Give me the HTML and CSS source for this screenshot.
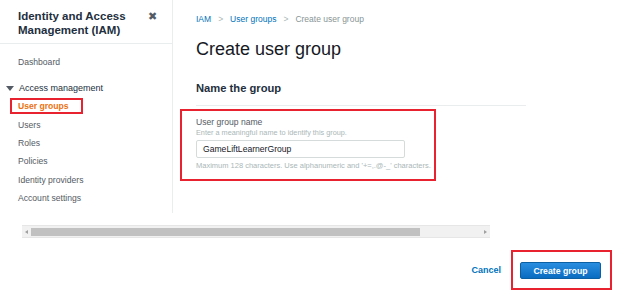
FILE: index.html
```html
<!DOCTYPE html>
<html lang="en">
<head>
  <meta charset="UTF-8" />
  <title>Create user group - IAM</title>
  <link rel="stylesheet" href="styles.css">
</head>
<body>
  <div class="layout">
    <!-- Side navigation -->
    <div class="sidebar">
      <div class="side-head">
        <h2>Identity and Access Management (IAM)</h2>
        <span class="close">&#10006;</span>
      </div>
      <ul class="nav">
        <li class="nav-item">Dashboard</li>
        <li class="nav-group"><span class="caret"></span>Access management</li>
        <li class="nav-item active"><span class="mark">User groups</span></li>
        <li class="nav-item">Users</li>
        <li class="nav-item">Roles</li>
        <li class="nav-item">Policies</li>
        <li class="nav-item">Identity providers</li>
        <li class="nav-item">Account settings</li>
      </ul>
    </div>

    <!-- Main content -->
    <div class="main">
      <div class="crumbs">
        <a href="#">IAM</a><span class="sep">&gt;</span><a href="#">User groups</a><span class="sep">&gt;</span><span class="here">Create user group</span>
      </div>
      <h1>Create user group</h1>
      <div class="panel">
        <h3>Name the group</h3>
      </div>
      <div class="field mark-box">
        <label>User group name</label>
        <p class="desc">Enter a meaningful name to identify this group.</p>
        <div class="input">GameLiftLearnerGroup</div>
        <p class="hint">Maximum 128 characters. Use alphanumeric and '+=,.@-_' characters.</p>
      </div>
    </div>
  </div>

  <!-- Horizontal scrollbar -->
  <div class="hscroll">
    <span class="arrow left"></span>
    <div class="thumb"></div>
    <span class="arrow right"></span>
  </div>

  <div class="actions">
    <a href="#" class="cancel">Cancel</a>
    <div class="btn-box">
      <button class="btn primary">Create group</button>
    </div>
  </div>
</body>
</html>
```

FILE: styles.css
```css
body {
  margin: 0;
  font-family: "Liberation Sans", Arial, sans-serif;
  background: #ffffff;
  color: #16191f;
}
.layout {
  display: flex;
  height: 213px;
}
.sidebar {
  width: 172px;
  border-right: 1px solid #eaeded;
  flex-shrink: 0;
}
.side-head {
  display: flex;
  justify-content: space-between;
  align-items: flex-start;
  height: 44px;
  padding: 9px 15px 0 18px;
  box-sizing: border-box;
  border-bottom: 1px solid #eaeded;
}
.side-head h2 {
  margin: 0;
  font-size: 11.5px;
  line-height: 14px;
  font-weight: bold;
  color: #232f3e;
  width: 125px;
}
.close {
  font-size: 11px;
  color: #545b64;
  margin-top: 1px;
}
.nav {
  list-style: none;
  margin: 0;
  padding: 9px 0 0 0;
}
.nav li {
  font-size: 8.6px;
  color: #545b64;
  height: 18.4px;
  line-height: 18.4px;
  padding-left: 18px;
}
.nav .nav-group {
  font-size: 9px;
  color: #232f3e;
  padding-left: 6px;
  margin-top: 7.5px;
  display: flex;
  align-items: center;
}
.caret {
  width: 0;
  height: 0;
  border-left: 4px solid transparent;
  border-right: 4px solid transparent;
  border-top: 5px solid #545b64;
  margin-right: 5px;
}
.nav .active {
  color: #ec7211;
  font-weight: bold;
}
.mark {
  display: inline-block;
  border: 2px solid #e8222e;
  padding: 0 12px 0 6px;
  margin-left: -8px;
  line-height: 12px;
}
.main {
  padding-left: 23px;
  flex: 1;
}
.crumbs {
  font-size: 8.5px;
  line-height: 12px;
  margin-top: 13px;
  color: #879596;
}
.crumbs a {
  color: #0073bb;
  text-decoration: none;
}
.crumbs .sep {
  color: #aab7b8;
  margin: 0 7px;
}
h1 {
  font-size: 18px;
  font-weight: normal;
  color: #16191f;
  margin: 13px 0 0 0;
  line-height: 22px;
}
.panel {
  width: 330px;
  border-bottom: 1px solid #eaeded;
  padding: 21px 0 10px 0;
}
.panel h3 {
  margin: 0;
  font-size: 11.2px;
  line-height: 14px;
  color: #232f3e;
}
.field {
  width: 238px;
  margin: 3px 0 0 -16px;
  padding: 6px 0 8px 14px;
}
.mark-box {
  border: 2px solid #e8222e;
}
.field label {
  display: block;
  font-size: 8.6px;
  color: #545b64;
  line-height: 11px;
}
.desc {
  margin: 0;
  font-size: 7.3px;
  color: #aab7b8;
  line-height: 10px;
}
.input {
  width: 209px;
  height: 18px;
  box-sizing: border-box;
  margin-top: 2px;
  border: 1px solid #d5dbdb;
  border-radius: 2px;
  font-size: 8.6px;
  line-height: 16px;
  padding-left: 6px;
  color: #16191f;
}
.hint {
  margin: 3px 0 0 0;
  font-size: 7.5px;
  color: #aab7b8;
  line-height: 10px;
  white-space: nowrap;
}
.hscroll {
  display: flex;
  align-items: center;
  margin: 12px 0 0 22px;
  width: 468px;
  height: 11px;
  background: #f1f1f1;
  border-top: 1px solid #e6e6e6;
  border-bottom: 1px solid #e6e6e6;
}
.thumb {
  width: 389px;
  height: 8px;
  background: #c1c1c1;
  margin-left: 3px;
}
.arrow {
  width: 0;
  height: 0;
  border-top: 2px solid transparent;
  border-bottom: 2px solid transparent;
}
.arrow.left {
  border-right: 3px solid #a0a0a0;
  margin-left: 3px;
}
.arrow.right {
  border-left: 3px solid #a0a0a0;
  margin-left: auto;
  margin-right: 3px;
}
.actions {
  display: flex;
  justify-content: flex-end;
  align-items: center;
  margin: 12px 28px 0 0;
}
.cancel {
  font-size: 9px;
  font-weight: bold;
  color: #0073bb;
  text-decoration: none;
  margin-right: 10px;
}
.btn-box {
  border: 2px solid #e8222e;
  padding: 10px 9px 9px 7px;
}
.btn {
  display: block;
  border: 1px solid #0b5fa3;
  border-radius: 2px;
  font-family: "Liberation Sans", Arial, sans-serif;
  font-size: 8.7px;
  font-weight: bold;
  cursor: pointer;
}
.primary {
  background: linear-gradient(#2a8ee0, #0a6cc0);
  color: #ffffff;
  width: 81px;
  height: 17px;
  padding: 0;
}
```
